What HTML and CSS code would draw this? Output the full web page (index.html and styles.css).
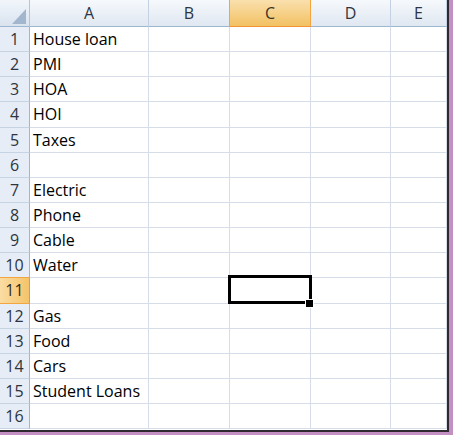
FILE: index.html
```html
<!DOCTYPE html>
<html>
<head>
<meta charset="utf-8">
<link rel="stylesheet" href="styles.css">
</head>
<body>
<div class="sheet">
  <div class="corner"><span class="tri"></span></div>
  <div class="colhdr">A</div>
  <div class="colhdr">B</div>
  <div class="colhdr sel">C</div>
  <div class="colhdr">D</div>
  <div class="colhdr">E</div>

  <div class="rowhdr">1</div><div class="cell">House loan</div><div class="cell"></div><div class="cell"></div><div class="cell"></div><div class="cell"></div>
  <div class="rowhdr">2</div><div class="cell">PMI</div><div class="cell"></div><div class="cell"></div><div class="cell"></div><div class="cell"></div>
  <div class="rowhdr">3</div><div class="cell">HOA</div><div class="cell"></div><div class="cell"></div><div class="cell"></div><div class="cell"></div>
  <div class="rowhdr">4</div><div class="cell">HOI</div><div class="cell"></div><div class="cell"></div><div class="cell"></div><div class="cell"></div>
  <div class="rowhdr">5</div><div class="cell">Taxes</div><div class="cell"></div><div class="cell"></div><div class="cell"></div><div class="cell"></div>
  <div class="rowhdr">6</div><div class="cell"></div><div class="cell"></div><div class="cell"></div><div class="cell"></div><div class="cell"></div>
  <div class="rowhdr">7</div><div class="cell">Electric</div><div class="cell"></div><div class="cell"></div><div class="cell"></div><div class="cell"></div>
  <div class="rowhdr">8</div><div class="cell">Phone</div><div class="cell"></div><div class="cell"></div><div class="cell"></div><div class="cell"></div>
  <div class="rowhdr">9</div><div class="cell">Cable</div><div class="cell"></div><div class="cell"></div><div class="cell"></div><div class="cell"></div>
  <div class="rowhdr">10</div><div class="cell">Water</div><div class="cell"></div><div class="cell"></div><div class="cell"></div><div class="cell"></div>
  <div class="rowhdr sel">11</div><div class="cell"></div><div class="cell"></div><div class="cell active"><div class="selbox"></div><div class="handle"></div></div><div class="cell"></div><div class="cell"></div>
  <div class="rowhdr">12</div><div class="cell">Gas</div><div class="cell"></div><div class="cell"></div><div class="cell"></div><div class="cell"></div>
  <div class="rowhdr">13</div><div class="cell">Food</div><div class="cell"></div><div class="cell"></div><div class="cell"></div><div class="cell"></div>
  <div class="rowhdr">14</div><div class="cell">Cars</div><div class="cell"></div><div class="cell"></div><div class="cell"></div><div class="cell"></div>
  <div class="rowhdr">15</div><div class="cell">Student Loans</div><div class="cell"></div><div class="cell"></div><div class="cell"></div><div class="cell"></div>
  <div class="rowhdr">16</div><div class="cell"></div><div class="cell"></div><div class="cell"></div><div class="cell"></div><div class="cell"></div>
</div>
</body>
</html>
```
FILE: styles.css
```css
html, body {
  margin: 0;
  padding: 0;
}
body {
  background: #c48fc3;
  width: 453px;
  height: 435px;
  overflow: hidden;
  font-family: "Open Sans", "Noto Sans", sans-serif;
  font-size: 16px;
  color: #000;
}
.sheet {
  width: 447px;
  height: 430px;
  background: #fff;
  border-right: 2px solid #2f2a30;
  border-bottom: 2px solid #2f2a30;
  display: grid;
  grid-template-columns: 30px 119px 81px 81px 80px 1fr;
  grid-template-rows: 27px 25px 25px 25px 26px 25px 25px 25px 25px 25px 25px 26px 25px 25px 25px 25px 25px;
  overflow: hidden;
}
.sheet > div {
  box-sizing: border-box;
}
.sheet > .corner {
  background: linear-gradient(#f2f6fb, #d9e3ef);
  border-right: 1px solid #b4c5d9;
  border-bottom: 1px solid #9eb6ce;
  display: flex;
  justify-content: flex-end;
  align-items: flex-end;
  padding: 0 3px 2px 0;
}
.tri {
  display: block;
  width: 0;
  height: 0;
  border-style: solid;
  border-width: 0 0 15px 14px;
  border-color: transparent transparent #a2b6ce transparent;
}
.colhdr {
  background: linear-gradient(#f6f9fc, #dfe7f1);
  border-right: 1px solid #c3d1e2;
  border-bottom: 1px solid #9eb6ce;
  text-align: center;
  line-height: 26px;
  color: #2e3540;
}
.colhdr.sel {
  background: linear-gradient(#fae0ad, #f2c163);
  border-right: 1px solid #f2a541;
  border-bottom: 1px solid #f29436;
  border-left: 1px solid #f2a541;
  margin-left: -1px;
  color: #3a3225;
}
.rowhdr {
  background: #e6edf6;
  border-right: 1px solid #9eb6ce;
  border-bottom: 1px solid #c5d3e3;
  text-align: center;
  line-height: 24px;
  color: #2e3540;
}
.rowhdr.sel {
  background: linear-gradient(90deg, #fbdca3, #f4c46a);
  border-right: 1px solid #f29436;
  border-bottom: 1px solid #f2a541;
  border-top: 1px solid #f2a541;
  margin-top: -1px;
  line-height: 24px;
  color: #2d2a22;
}
.cell {
  border-right: 1px solid #d6dce8;
  border-bottom: 1px solid #d6dce8;
  line-height: 24px;
  padding-left: 3px;
  white-space: nowrap;
}
.cell.active {
  position: relative;
}
.selbox {
  position: absolute;
  left: -2px;
  top: -3px;
  width: 84px;
  height: 29px;
  box-sizing: border-box;
  border: 3px solid #000;
}
.handle {
  position: absolute;
  left: 75px;
  top: 21px;
  width: 7px;
  height: 7px;
  background: #000;
  border: 1px solid #fff;
  box-sizing: content-box;
}
```
